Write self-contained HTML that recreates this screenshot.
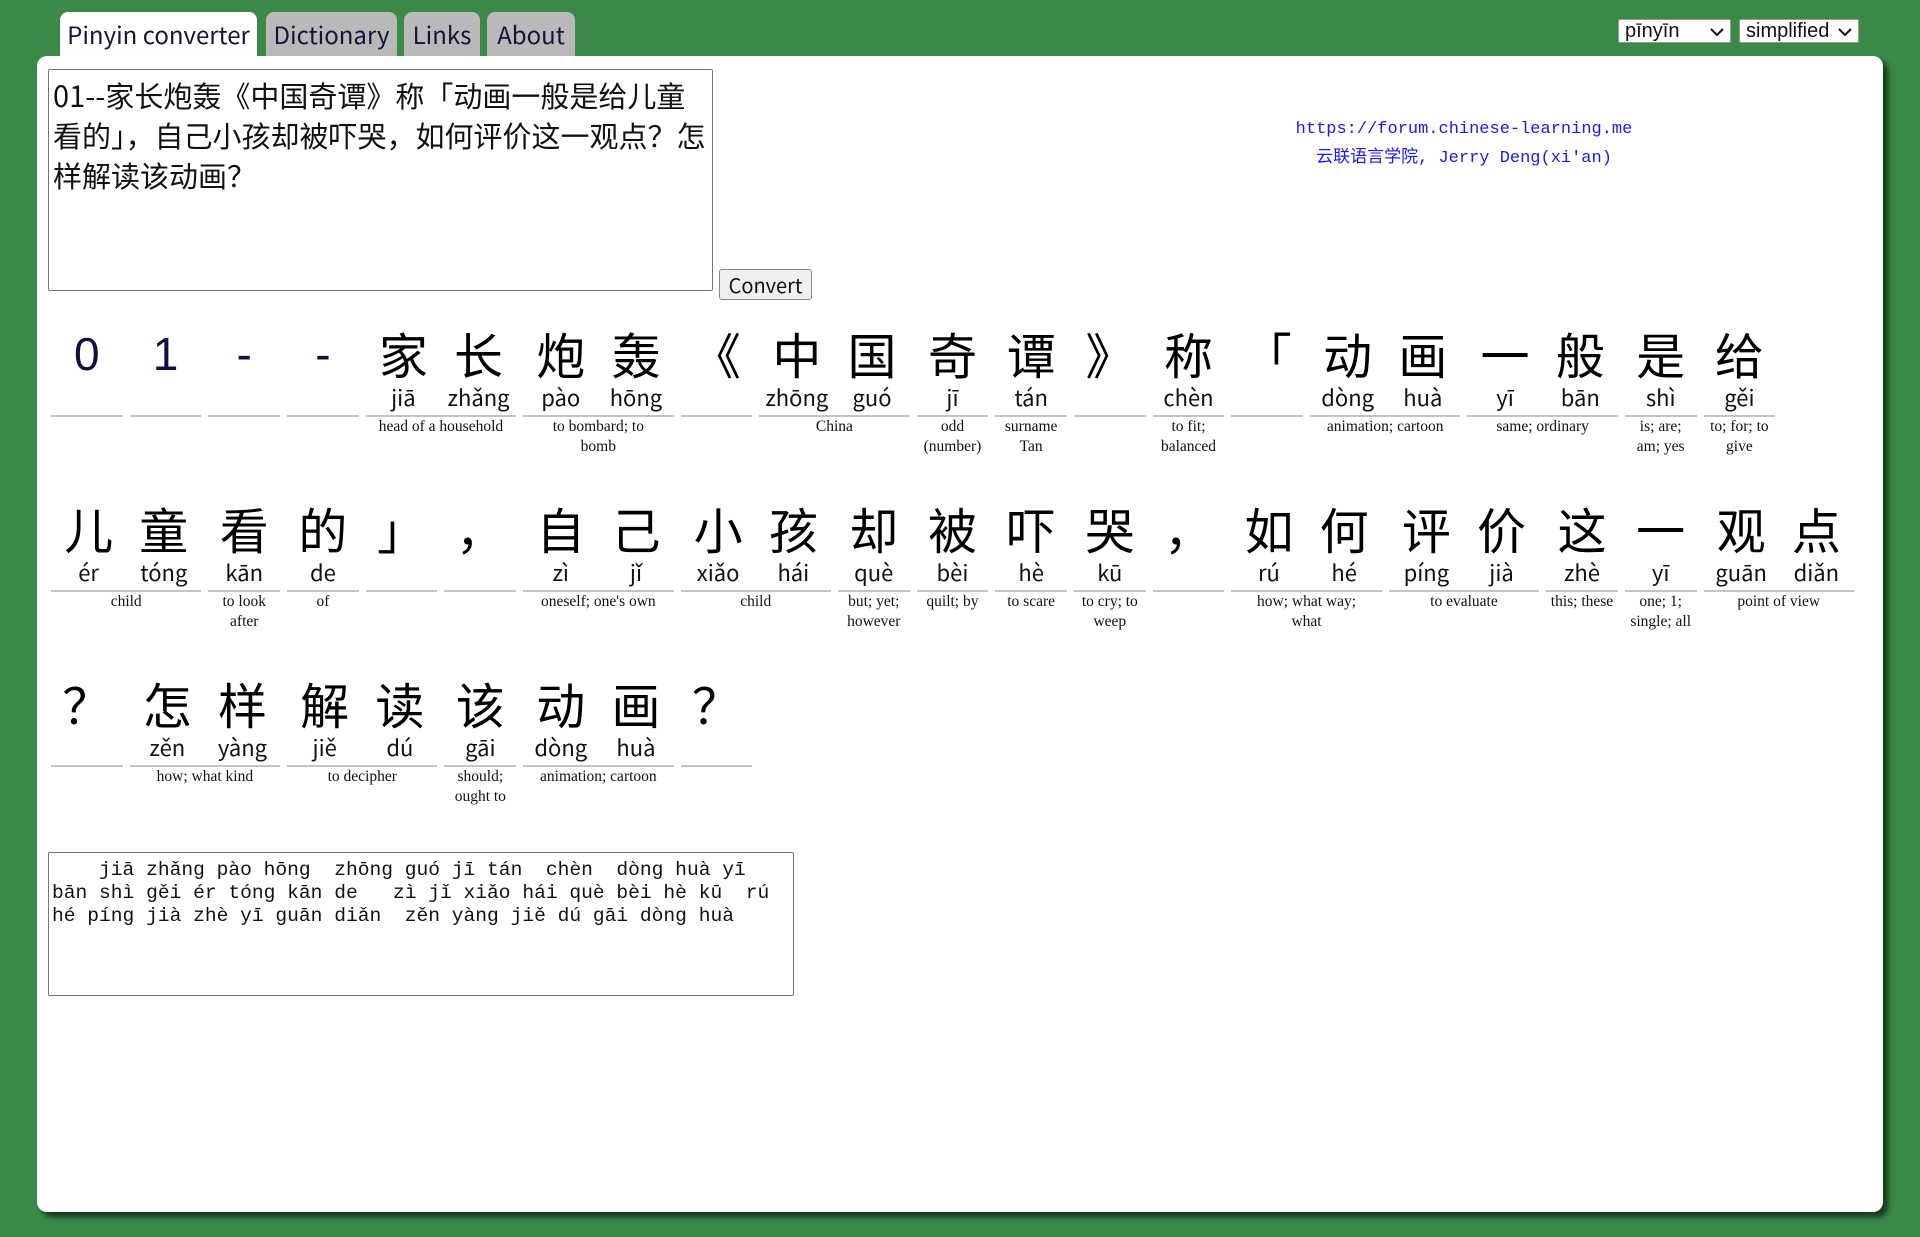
<!DOCTYPE html>
<html><head><meta charset="utf-8"><style>
*{box-sizing:border-box;margin:0;padding:0}
body{width:1920px;height:1237px;background:#3a8947;position:relative;overflow:hidden;font-family:"Liberation Sans","Noto Sans CJK SC",sans-serif}
.tab{position:absolute;top:12px;height:44px;border-radius:8px 8px 0 0;background:#b9b9b9;color:#14143a;font-size:24px;line-height:44px;text-align:center;font-family:"Noto Sans CJK SC","Liberation Sans",sans-serif}
.tab.act{background:#fff}
.sel{position:absolute;top:19px;height:24px;background:#fff;border:1px solid #999;border-radius:2px;font-size:20px;line-height:22px;padding-left:6px;color:#111}
.sel svg{position:absolute;right:6px;top:7px}
.panel{position:absolute;left:37px;top:56px;width:1846px;height:1156px;background:#fff;border-radius:10px;box-shadow:5px 5px 6px rgba(0,0,0,.6)}
.ta{position:absolute;border:1px solid #767676;border-radius:2px;background:#fff}
.t1{left:48px;top:69px;width:665px;height:222px;padding:5px 4px;font-size:29px;line-height:40px;font-family:"Noto Sans CJK SC",sans-serif;color:#111}
.btn{position:absolute;left:719px;top:269px;width:93px;height:31px;border:1px solid #8a8a8a;border-radius:3px;background:#efefef;font-size:20px;line-height:29px;text-align:center;font-family:"Noto Sans CJK SC","Liberation Sans",sans-serif;color:#111}
.link{position:absolute;left:1264px;width:400px;text-align:center;color:#1a1aee;font-size:17px;font-family:"Liberation Mono","Noto Sans CJK SC",monospace}
.row{position:absolute;left:51px;display:flex;align-items:flex-start}
.g{margin-right:7px;display:flex;flex-direction:column}
.cs{display:flex;border-bottom:2px solid #c4c4c4;padding-bottom:5px}
.c{flex:1;text-align:center}
.h{height:60px;line-height:60px;font-size:49px;font-family:"Noto Sans CJK SC",sans-serif;color:#000}
.h.n{color:#101040;font-family:"Liberation Sans",sans-serif;font-size:46px}
.p{height:26px;line-height:26px;font-size:22px;color:#111;font-family:"Noto Sans CJK SC","Liberation Sans",sans-serif}
.d{text-align:center;font-family:"Liberation Serif",serif;font-size:15.5px;line-height:20px;color:#111;white-space:nowrap}
.t2{left:48px;top:852px;width:746px;height:144px;padding:6px 3px;font-family:"Liberation Mono",monospace;font-size:19.6px;line-height:23px;white-space:pre;color:#111}
</style></head><body>
<div class="tab act" style="left:60px;width:197px">Pinyin converter</div>
<div class="tab" style="left:266px;width:131px">Dictionary</div>
<div class="tab" style="left:404px;width:76px">Links</div>
<div class="tab" style="left:487px;width:88px">About</div>
<div class="sel" style="left:1618px;width:113px">pīnyīn<svg width="14" height="10"><path d="M1 2l6 6 6-6" stroke="#111" stroke-width="2" fill="none"/></svg></div>
<div class="sel" style="left:1739px;width:120px">simplified<svg width="14" height="10"><path d="M1 2l6 6 6-6" stroke="#111" stroke-width="2" fill="none"/></svg></div>
<div class="panel"></div>
<div class="ta t1">01--家长炮轰《中国奇谭》称「动画一般是给儿童看的」，自己小孩却被吓哭，如何评价这一观点？怎样解读该动画？</div>
<div class="btn">Convert</div>
<div class="link" style="top:120px">https://forum.chinese-learning.me</div>
<div class="link" style="top:142px">云联语言学院, Jerry Deng(xi'an)</div>

<div class="row" style="top:324px">
<div class="g" style="width:71.7px"><div class="cs"><div class="c"><div class="h n">0</div><div class="p"></div></div></div></div>
<div class="g" style="width:71.7px"><div class="cs"><div class="c"><div class="h n">1</div><div class="p"></div></div></div></div>
<div class="g" style="width:71.7px"><div class="cs"><div class="c"><div class="h n">-</div><div class="p"></div></div></div></div>
<div class="g" style="width:71.7px"><div class="cs"><div class="c"><div class="h n">-</div><div class="p"></div></div></div></div>
<div class="g" style="width:150.4px"><div class="cs"><div class="c"><div class="h">家</div><div class="p">jiā</div></div><div class="c"><div class="h">长</div><div class="p">zhǎng</div></div></div><div class="d">head of a household</div></div>
<div class="g" style="width:150.4px"><div class="cs"><div class="c"><div class="h">炮</div><div class="p">pào</div></div><div class="c"><div class="h">轰</div><div class="p">hōng</div></div></div><div class="d">to bombard; to<br>bomb</div></div>
<div class="g" style="width:71.7px"><div class="cs"><div class="c"><div class="h">《</div><div class="p"></div></div></div></div>
<div class="g" style="width:150.4px"><div class="cs"><div class="c"><div class="h">中</div><div class="p">zhōng</div></div><div class="c"><div class="h">国</div><div class="p">guó</div></div></div><div class="d">China</div></div>
<div class="g" style="width:71.7px"><div class="cs"><div class="c"><div class="h">奇</div><div class="p">jī</div></div></div><div class="d">odd<br>(number)</div></div>
<div class="g" style="width:71.7px"><div class="cs"><div class="c"><div class="h">谭</div><div class="p">tán</div></div></div><div class="d">surname<br>Tan</div></div>
<div class="g" style="width:71.7px"><div class="cs"><div class="c"><div class="h">》</div><div class="p"></div></div></div></div>
<div class="g" style="width:71.7px"><div class="cs"><div class="c"><div class="h">称</div><div class="p">chèn</div></div></div><div class="d">to fit;<br>balanced</div></div>
<div class="g" style="width:71.7px"><div class="cs"><div class="c"><div class="h">「</div><div class="p"></div></div></div></div>
<div class="g" style="width:150.4px"><div class="cs"><div class="c"><div class="h">动</div><div class="p">dòng</div></div><div class="c"><div class="h">画</div><div class="p">huà</div></div></div><div class="d">animation; cartoon</div></div>
<div class="g" style="width:150.4px"><div class="cs"><div class="c"><div class="h">一</div><div class="p">yī</div></div><div class="c"><div class="h">般</div><div class="p">bān</div></div></div><div class="d">same; ordinary</div></div>
<div class="g" style="width:71.7px"><div class="cs"><div class="c"><div class="h">是</div><div class="p">shì</div></div></div><div class="d">is; are;<br>am; yes</div></div>
<div class="g" style="width:71.7px"><div class="cs"><div class="c"><div class="h">给</div><div class="p">gěi</div></div></div><div class="d">to; for; to<br>give</div></div>
</div>

<div class="row" style="top:499px">
<div class="g" style="width:150.4px"><div class="cs"><div class="c"><div class="h">儿</div><div class="p">ér</div></div><div class="c"><div class="h">童</div><div class="p">tóng</div></div></div><div class="d">child</div></div>
<div class="g" style="width:71.7px"><div class="cs"><div class="c"><div class="h">看</div><div class="p">kān</div></div></div><div class="d">to look<br>after</div></div>
<div class="g" style="width:71.7px"><div class="cs"><div class="c"><div class="h">的</div><div class="p">de</div></div></div><div class="d">of</div></div>
<div class="g" style="width:71.7px"><div class="cs"><div class="c"><div class="h">」</div><div class="p"></div></div></div></div>
<div class="g" style="width:71.7px"><div class="cs"><div class="c"><div class="h">，</div><div class="p"></div></div></div></div>
<div class="g" style="width:150.4px"><div class="cs"><div class="c"><div class="h">自</div><div class="p">zì</div></div><div class="c"><div class="h">己</div><div class="p">jǐ</div></div></div><div class="d">oneself; one's own</div></div>
<div class="g" style="width:150.4px"><div class="cs"><div class="c"><div class="h">小</div><div class="p">xiǎo</div></div><div class="c"><div class="h">孩</div><div class="p">hái</div></div></div><div class="d">child</div></div>
<div class="g" style="width:71.7px"><div class="cs"><div class="c"><div class="h">却</div><div class="p">què</div></div></div><div class="d">but; yet;<br>however</div></div>
<div class="g" style="width:71.7px"><div class="cs"><div class="c"><div class="h">被</div><div class="p">bèi</div></div></div><div class="d">quilt; by</div></div>
<div class="g" style="width:71.7px"><div class="cs"><div class="c"><div class="h">吓</div><div class="p">hè</div></div></div><div class="d">to scare</div></div>
<div class="g" style="width:71.7px"><div class="cs"><div class="c"><div class="h">哭</div><div class="p">kū</div></div></div><div class="d">to cry; to<br>weep</div></div>
<div class="g" style="width:71.7px"><div class="cs"><div class="c"><div class="h">，</div><div class="p"></div></div></div></div>
<div class="g" style="width:150.4px"><div class="cs"><div class="c"><div class="h">如</div><div class="p">rú</div></div><div class="c"><div class="h">何</div><div class="p">hé</div></div></div><div class="d">how; what way;<br>what</div></div>
<div class="g" style="width:150.4px"><div class="cs"><div class="c"><div class="h">评</div><div class="p">píng</div></div><div class="c"><div class="h">价</div><div class="p">jià</div></div></div><div class="d">to evaluate</div></div>
<div class="g" style="width:71.7px"><div class="cs"><div class="c"><div class="h">这</div><div class="p">zhè</div></div></div><div class="d">this; these</div></div>
<div class="g" style="width:71.7px"><div class="cs"><div class="c"><div class="h">一</div><div class="p">yī</div></div></div><div class="d">one; 1;<br>single; all</div></div>
<div class="g" style="width:150.4px"><div class="cs"><div class="c"><div class="h">观</div><div class="p">guān</div></div><div class="c"><div class="h">点</div><div class="p">diǎn</div></div></div><div class="d">point of view</div></div>
</div>

<div class="row" style="top:674px">
<div class="g" style="width:71.7px"><div class="cs"><div class="c"><div class="h">？</div><div class="p"></div></div></div></div>
<div class="g" style="width:150.4px"><div class="cs"><div class="c"><div class="h">怎</div><div class="p">zěn</div></div><div class="c"><div class="h">样</div><div class="p">yàng</div></div></div><div class="d">how; what kind</div></div>
<div class="g" style="width:150.4px"><div class="cs"><div class="c"><div class="h">解</div><div class="p">jiě</div></div><div class="c"><div class="h">读</div><div class="p">dú</div></div></div><div class="d">to decipher</div></div>
<div class="g" style="width:71.7px"><div class="cs"><div class="c"><div class="h">该</div><div class="p">gāi</div></div></div><div class="d">should;<br>ought to</div></div>
<div class="g" style="width:150.4px"><div class="cs"><div class="c"><div class="h">动</div><div class="p">dòng</div></div><div class="c"><div class="h">画</div><div class="p">huà</div></div></div><div class="d">animation; cartoon</div></div>
<div class="g" style="width:71.7px"><div class="cs"><div class="c"><div class="h">？</div><div class="p"></div></div></div></div>
</div>

<div class="ta t2">    jiā zhǎng pào hōng  zhōng guó jī tán  chèn  dòng huà yī
bān shì gěi ér tóng kān de   zì jǐ xiǎo hái què bèi hè kū  rú
hé píng jià zhè yī guān diǎn  zěn yàng jiě dú gāi dòng huà</div>
</body></html>
